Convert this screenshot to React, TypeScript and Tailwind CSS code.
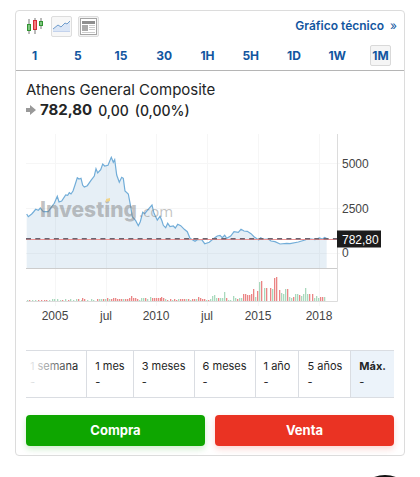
import React, { useState } from "react";

const intervals = ["1", "5", "15", "30", "1H", "5H", "1D", "1W", "1M"];
const periods = ["1 semana", "1 mes", "3 meses", "6 meses", "1 año", "5 años", "Máx."];

const line =
  "26.7,214 28.3,216.7 31.7,214 33.5,212 35.7,209.3 38.3,210.3 40.3,208 43.3,211.7 48.3,211.7 51.7,206.7 54.3,203.3 57.3,196.3 59,202 61.7,201 65.7,195 67.7,195.3 69.3,192.7 71,194 73,191 75,185 77.3,177.7 79,179 81,178.3 82.7,185.3 84.3,187 87.3,185.7 91,180.3 94.3,176 96,168.7 97.7,173 100.7,169.7 102.7,164 104.7,166 108,165.3 111.3,157.3 113.3,162.3 114.7,159.7 116.7,175 119.3,182.3 121.7,177.3 123.3,178.3 125,191 128.3,194 130.7,206.7 132.3,216.7 135.7,220.7 138.3,225.7 140.3,221.7 142.7,212.3 144.7,213.7 148,209.7 152,205 154,213.3 157.3,220 160,216.3 162,221 163.3,225.3 165.7,227.7 167.7,223.3 170,226.7 173.3,226 175.3,228 177.7,224.3 180.7,225.7 184.3,229.3 187.3,231.7 190,238.3 195,241.3 197.3,239.7 201.7,239.7 204.7,243.7 209.3,242.3 212.7,239.3 217.3,236 220,235.3 222.3,237.7 224.7,235.3 226.7,238.3 230.7,236 234,231.7 238.3,232.3 241,229.3 244,231 247.3,231.3 251,233.7 254,236.7 258.7,240 260.7,237.7 263.3,239.3 268.3,239 271,241 275,241.7 280,244 286.7,243.3 290,243.7 298.3,242 305,240 308,238.7 315,239.7 319.3,238 322.5,239 324.7,237.5 326.7,238.5";

// Monthly volume: x position, height, r = down / g = up
const volume: [number, number, "r" | "g"][] = [
  [27, 1, "g"], [29, 1, "r"], [32, 1, "g"], [35, 1, "g"], [38, 1, "r"], [41, 1, "r"], [44, 1, "r"], [46, 1, "r"],
  [49, 1, "g"], [52, 2, "g"], [54, 2, "g"], [57, 2, "g"], [60, 1, "g"], [62, 1, "r"], [65, 2, "g"], [68, 1, "r"],
  [70, 2, "g"], [73, 1, "g"], [76, 2, "g"], [78, 2, "r"], [81, 1, "g"], [82, 3, "r"], [84, 2, "r"], [87, 1, "g"],
  [91, 2, "g"], [93, 1, "g"], [97, 2, "r"], [99, 2, "g"], [101, 2, "g"], [103, 2, "r"], [105, 2, "g"], [107, 3, "r"],
  [109, 2, "g"], [111, 2, "r"], [113, 3, "r"], [115, 3, "r"], [117, 2, "r"], [119, 2, "r"], [121, 2, "r"], [123, 2, "g"],
  [125, 2, "r"], [127, 2, "r"], [129, 3, "r"], [131, 5, "r"], [133, 3, "r"], [135, 3, "r"], [137, 2, "r"], [139, 1, "g"],
  [141, 3, "g"], [143, 3, "g"], [145, 3, "r"], [147, 2, "g"], [150, 4, "g"], [152, 3, "r"], [154, 3, "r"], [156, 3, "r"],
  [158, 3, "r"], [160, 3, "r"], [161, 4, "r"], [163, 3, "r"], [165, 2, "g"], [167, 1, "r"], [170, 2, "r"], [172, 1, "g"],
  [174, 2, "r"], [176, 1, "r"], [178, 2, "g"], [180, 2, "r"], [182, 2, "r"], [184, 2, "r"], [186, 2, "g"], [188, 2, "r"],
  [190, 1, "g"], [192, 2, "r"], [194, 2, "r"], [196, 2, "g"], [198, 4, "r"], [200, 3, "r"], [202, 2, "r"], [204, 2, "r"],
  [206, 1, "g"], [208, 1, "r"], [210, 2, "g"], [212, 5, "g"], [214, 6, "g"], [216, 3, "g"], [218, 3, "r"], [220, 3, "g"],
  [222, 3, "g"], [224, 9, "g"], [226, 3, "r"], [228, 1, "g"], [230, 1, "g"], [233, 5, "g"], [235, 3, "g"], [237, 2, "r"],
  [239, 3, "g"], [241, 3, "g"], [243, 7, "r"], [245, 7, "r"], [247, 6, "r"], [249, 6, "r"], [251, 7, "r"], [253, 12, "r"],
  [255, 4, "g"], [257, 10, "r"], [259, 19, "g"], [261, 20, "r"], [264, 13, "g"], [266, 13, "r"], [270, 13, "r"], [272, 12, "g"],
  [274, 23, "r"], [276, 24, "r"], [279, 11, "r"], [281, 8, "g"], [283, 7, "g"], [285, 12, "g"], [287, 12, "r"], [289, 4, "g"],
  [291, 3, "g"], [293, 4, "r"], [295, 7, "g"], [297, 7, "g"], [299, 6, "r"], [301, 5, "g"], [303, 7, "g"], [305, 13, "g"],
  [307, 7, "g"], [309, 7, "r"], [312, 7, "r"], [314, 3, "g"], [316, 5, "g"], [318, 3, "g"], [320, 4, "r"], [322, 4, "r"], [324, 4, "g"],
];

function PriceChart() {
  return (
    <svg viewBox="26 134 368 190" className="block w-full" role="img" aria-label="Athens General Composite">
      <g stroke="#f6f6f6">
        {[55, 106, 156, 207, 258, 319].map((x) => (
          <path key={x} d={`M${x + 0.5} 134V306`} />
        ))}
        <path d="M26 163.5H340M26 208.5H340M26 253.5H340" />
      </g>
      <polygon points={`26.7,268 ${line} 326.7,268`} fill="#1971b0" fillOpacity=".11" />
      <polyline points={line} fill="none" stroke="#72add8" strokeWidth="1.2" />
      <g fill="#777" fillOpacity=".45">
        <text x="40" y="217" className="font-['Inter'] text-[21px] font-extrabold">Investing</text>
        <text x="139" y="217" className="font-['Open_Sans'] text-[15px]">.com</text>
      </g>
      <path d="M106 199l4-1v3l-4 1z" fill="#f0d48a" />
      <path d="M26 238.5H337" stroke="#6b6470" strokeDasharray="5 4.3" />
      <path d="M26 239.5H337" stroke="#ee8f8f" />
      <path d="M26 239.5H337" stroke="#6b6470" strokeOpacity=".5" strokeDasharray="5 4.3" />
      <path d="M26 268.5H337" stroke="#ccc" />
      {volume.map(([x, h, kind]) => (
        <rect key={x} x={x} y={301 - h} width="1.3" height={h} fill={kind === "r" ? "#ea8585" : "#a9d9bd"} />
      ))}
      <path d="M26 301.5H337.5V134" fill="none" stroke="#dcdcdc" />
      <rect x="337" y="230.5" width="44" height="17" fill="#1c1c1c" />
      <g className="font-['Liberation_Sans'] text-[12px]" fill="#444">
        <text x="342" y="168">5000</text>
        <text x="342" y="213">2500</text>
        <text x="342" y="257">0</text>
        <text x="342" y="244" fill="#fff">782,80</text>
        <g textAnchor="middle">
          <text x="55" y="320">2005</text>
          <text x="106" y="320">jul</text>
          <text x="156" y="320">2010</text>
          <text x="207" y="320">jul</text>
          <text x="258" y="320">2015</text>
          <text x="319" y="320">2018</text>
        </g>
      </g>
    </svg>
  );
}

function CandleIcon() {
  return (
    <svg width="18" height="18" viewBox="0 0 18 18" className="shrink-0">
      <path d="M3 2v15M9 1v16M15 1v11" stroke="#777" />
      <rect x="1.5" y="7.5" width="3" height="6" fill="#7fc77f" stroke="#329332" />
      <rect x="7.5" y="3.5" width="3" height="9" fill="#f47c7c" stroke="#d62c38" />
      <rect x="13.5" y="4.5" width="3" height="4" fill="#7fc77f" stroke="#329332" />
    </svg>
  );
}

function AreaIcon() {
  return (
    <svg width="17" height="14" viewBox="0 0 17 14">
      <path d="M0 10l5-4 3 2 4-4 2 1 3-3v11H0z" fill="#dbe6f6" />
      <path d="M0 10l5-4 3 2 4-4 2 1 3-3" fill="none" stroke="#6f9ccc" />
      <path d="M0 12.5h17" stroke="#c3d2ec" />
    </svg>
  );
}

function NewsIcon() {
  return (
    <svg width="17" height="17" viewBox="0 0 17 17">
      <rect x=".5" y=".5" width="16" height="16" fill="#fff" stroke="#a5a5a5" />
      <path d="M2 3h13v3H2z" fill="#8f8f8f" />
      <path d="M2 7h6v6H2z" fill="#aaa" />
      <path d="M9 7.5h6M9 9.5h6M9 11.5h6M2 14.5h13" stroke="#ccc" />
    </svg>
  );
}

export default function App() {
  const [interval, setActive] = useState("1M");
  const [period, setPeriod] = useState("Máx.");
  return (
    <div className="h-screen overflow-hidden bg-white px-[15px] pt-2.5 font-['Inter',sans-serif] text-[#232526]">
      <section className="rounded border border-[#dcdcdc] pb-[9px]">
        <header className="flex h-[30px] items-center gap-[9px] pr-[7px] pl-2.5">
          <button aria-label="Velas" className="flex h-[21px] w-4 items-center"><CandleIcon /></button>
          <button aria-label="Área" className="flex size-[21px] items-center justify-center rounded-xs border border-[#ddd] bg-[#f7f7f7]">
            <AreaIcon />
          </button>
          <button aria-label="Noticias" className="-ml-[3px] flex size-[21px] items-center justify-center rounded-xs border border-[#ddd] bg-[#f3f3f3]">
            <NewsIcon />
          </button>
          <a href="#tecnico" className="ml-auto flex items-center gap-1.5 text-[12px] font-semibold text-[#1256a0]">
            Gráfico técnico <span className="font-normal">»</span>
          </a>
        </header>
        <nav className="flex h-[30px] items-center justify-between border-b border-[#b5b5b5] pr-[13px] pl-2">
          {intervals.map((i) => (
            <button
              key={i}
              onClick={() => setActive(i)}
              className={`flex h-[21px] w-[21px] items-center justify-center rounded-xs border text-[12px] font-bold text-[#1256a0] ${
                i === interval ? "border-[#d9d9d9] bg-[#f5f5f5]" : "border-transparent"
              }`}
            >
              {i}
            </button>
          ))}
        </nav>
        <div className="px-2.5">
          <h1 className="mt-[7px] text-[15px] leading-6">Athens General Composite</h1>
          <div className="flex h-4 items-center">
            <svg width="10" height="10" viewBox="0 0 10 10" className="mr-1">
              <path d="M0 3h4V0l6 5-6 5V7H0z" fill="#999" />
            </svg>
            <span className="text-[15px] font-bold">782,80</span>
            <span className="ml-1.5 text-[14px] font-medium">0,00</span>
            <span className="ml-1.5 text-[14px] font-medium">(0,00%)</span>
          </div>
          <div className="mt-4"><PriceChart /></div>
          <div className="relative mt-[26px] flex justify-end overflow-hidden border-y border-[#dadde2]">
            {periods.map((p) => (
              <button
                key={p}
                onClick={() => setPeriod(p)}
                className={`h-[46px] shrink-0 border-l border-[#dadde2] px-2 text-left text-[11px] leading-4 whitespace-nowrap ${
                  p === period ? "bg-[#ecf3fa]" : ""
                }`}
              >
                <span className={p === period ? "block font-bold" : "block"}>{p}</span>
                <span className="block">-</span>
              </button>
            ))}
            <div className="pointer-events-none absolute -inset-y-px left-0 w-12 bg-linear-to-r from-white to-transparent" />
          </div>
          <div className="mt-[17px] flex gap-2.5 text-[13px] font-bold text-white">
            <button className="h-[31px] flex-1 rounded bg-[#0ea600] shadow-[0_3px_6px_#0ea60033]">Compra</button>
            <button className="h-[31px] flex-1 rounded bg-[#ea3323] shadow-[0_3px_6px_#ea332333]">Venta</button>
          </div>
        </div>
      </section>
      <button aria-label="Abrir menú" className="mt-[19px] mr-[-10px] ml-auto block size-[60px] rounded-full bg-[#111]" />
    </div>
  );
}
